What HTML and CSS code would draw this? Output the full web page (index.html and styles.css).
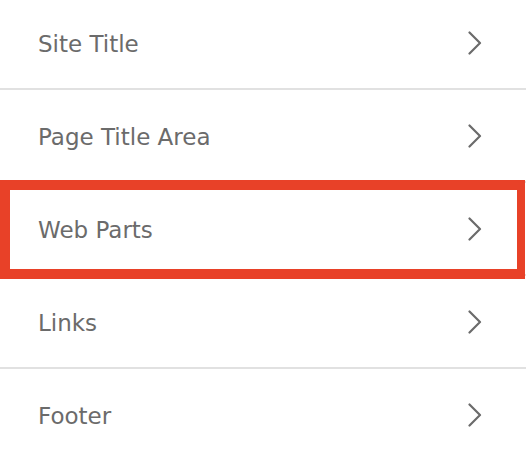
FILE: index.html
```html
<!DOCTYPE html>
<html lang="en">
<head>
<meta charset="utf-8">
<title>Settings</title>
<link rel="stylesheet" href="styles.css">
</head>
<body>
<ul class="list">
  <li class="row"><span class="label">Site Title</span><svg class="chev" viewBox="0 0 14 24" width="14" height="24"><path d="M1.5 1.5 L12 12 L1.5 22.5"/></svg></li>
  <li class="row"><span class="label">Page Title Area</span><svg class="chev" viewBox="0 0 14 24" width="14" height="24"><path d="M1.5 1.5 L12 12 L1.5 22.5"/></svg></li>
  <li class="row"><span class="label">Web Parts</span><svg class="chev" viewBox="0 0 14 24" width="14" height="24"><path d="M1.5 1.5 L12 12 L1.5 22.5"/></svg><span class="highlight"></span></li>
  <li class="row"><span class="label">Links</span><svg class="chev" viewBox="0 0 14 24" width="14" height="24"><path d="M1.5 1.5 L12 12 L1.5 22.5"/></svg></li>
  <li class="row"><span class="label">Footer</span><svg class="chev" viewBox="0 0 14 24" width="14" height="24"><path d="M1.5 1.5 L12 12 L1.5 22.5"/></svg></li>
</ul>
</body>
</html>
```
FILE: styles.css
```css
html, body {
  margin: 0;
  padding: 0;
  background: #ffffff;
  overflow: hidden;
}
.list {
  list-style: none;
  margin: -3px 0 0 0;
  padding: 0;
}
.row {
  position: relative;
  display: flex;
  align-items: center;
  justify-content: space-between;
  height: 91px;
  padding: 0 44px 0 38px;
  border-bottom: 2px solid #e1e1e1;
  font-family: "DejaVu Sans", Verdana, sans-serif;
  font-size: 23px;
  color: #6b6b6b;
}
.label {
  padding-top: 3px;
}
.chev {
  display: block;
  fill: none;
  stroke: #6b6b6b;
  stroke-width: 2.2;
  stroke-linecap: round;
  stroke-linejoin: round;
}
.highlight {
  position: absolute;
  left: 0;
  top: -3px;
  right: 1px;
  bottom: -5px;
  border: 10px solid #e84128;
  border-right-width: 8px;
  pointer-events: none;
}
```
